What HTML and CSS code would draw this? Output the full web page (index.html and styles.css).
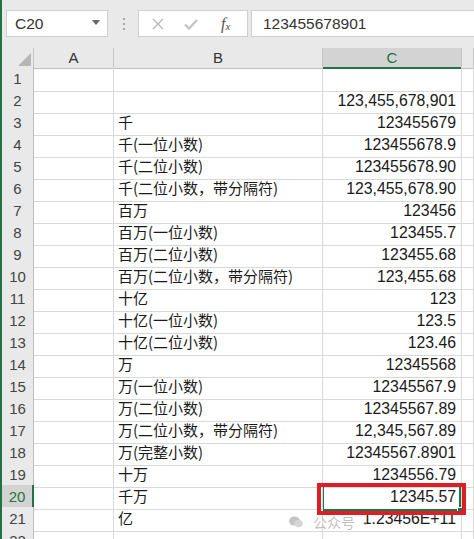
FILE: index.html
```html
<!DOCTYPE html>
<html lang="zh-CN">
  <head>
    <meta charset="utf-8">
    <title>数字格式 - 千 / 百万 / 十亿 / 万</title>
    <link rel="stylesheet" href="styles.css">
  </head>
  <body>
    <div class="Toolbar">
      <div class="Name-Box">
        <span>C20</span>
        <svg class="Drop" width="8" height="5" viewBox="0 0 8 5"><path d="M0 0h8L4 5z" fill="#666"/></svg>
      </div>
      <div class="Grip"><i></i><i></i><i></i></div>
      <div class="Fx-Box">
        <svg width="12" height="12" viewBox="0 0 12 12"><path d="M1 1l10 10M11 1L1 11" stroke="#b8b8b8" stroke-width="1.4"/></svg>
        <svg width="14" height="12" viewBox="0 0 14 12"><path d="M1 6.5l4 4L13 2" stroke="#c4c4c4" stroke-width="2.4" fill="none"/></svg>
        <span class="Fx">f<sub>x</sub></span>
      </div>
      <div class="Formula">123455678901</div>
    </div>

    <div class="Sheet">
      <div class="Row Head">
        <div class="Corner"><svg width="13" height="13" viewBox="0 0 13 13"><path d="M13 0v13H0z" fill="#b6b6b6"/></svg></div>
        <div class="Col">A</div>
        <div class="Col">B</div>
        <div class="Col Active">C</div>
        <div class="Col"></div>
      </div>
      <div class="Row"><div class="Num">1</div><div></div><div></div><div></div><div></div></div>
      <div class="Row"><div class="Num">2</div><div></div><div></div><div class="Val">123,455,678,901</div><div></div></div>
      <div class="Row"><div class="Num">3</div><div></div><div class="Txt">千</div><div class="Val">123455679</div><div></div></div>
      <div class="Row"><div class="Num">4</div><div></div><div class="Txt">千(一位小数)</div><div class="Val">123455678.9</div><div></div></div>
      <div class="Row"><div class="Num">5</div><div></div><div class="Txt">千(二位小数)</div><div class="Val">123455678.90</div><div></div></div>
      <div class="Row"><div class="Num">6</div><div></div><div class="Txt">千(二位小数，带分隔符)</div><div class="Val">123,455,678.90</div><div></div></div>
      <div class="Row"><div class="Num">7</div><div></div><div class="Txt">百万</div><div class="Val">123456</div><div></div></div>
      <div class="Row"><div class="Num">8</div><div></div><div class="Txt">百万(一位小数)</div><div class="Val">123455.7</div><div></div></div>
      <div class="Row"><div class="Num">9</div><div></div><div class="Txt">百万(二位小数)</div><div class="Val">123455.68</div><div></div></div>
      <div class="Row"><div class="Num">10</div><div></div><div class="Txt">百万(二位小数，带分隔符)</div><div class="Val">123,455.68</div><div></div></div>
      <div class="Row"><div class="Num">11</div><div></div><div class="Txt">十亿</div><div class="Val">123</div><div></div></div>
      <div class="Row"><div class="Num">12</div><div></div><div class="Txt">十亿(一位小数)</div><div class="Val">123.5</div><div></div></div>
      <div class="Row"><div class="Num">13</div><div></div><div class="Txt">十亿(二位小数)</div><div class="Val">123.46</div><div></div></div>
      <div class="Row"><div class="Num">14</div><div></div><div class="Txt">万</div><div class="Val">12345568</div><div></div></div>
      <div class="Row"><div class="Num">15</div><div></div><div class="Txt">万(一位小数)</div><div class="Val">12345567.9</div><div></div></div>
      <div class="Row"><div class="Num">16</div><div></div><div class="Txt">万(二位小数)</div><div class="Val">12345567.89</div><div></div></div>
      <div class="Row"><div class="Num">17</div><div></div><div class="Txt">万(二位小数，带分隔符)</div><div class="Val">12,345,567.89</div><div></div></div>
      <div class="Row"><div class="Num">18</div><div></div><div class="Txt">万(完整小数)</div><div class="Val">12345567.8901</div><div></div></div>
      <div class="Row"><div class="Num">19</div><div></div><div class="Txt">十万</div><div class="Val">1234556.79</div><div></div></div>
      <div class="Row"><div class="Num Active">20</div><div></div><div class="Txt">千万</div>
        <div class="Val Current">12345.57<span class="Sel"><i></i></span><span class="Mark"></span></div><div></div></div>
      <div class="Row"><div class="Num">21</div><div></div><div class="Txt">亿</div><div class="Val">1.23456E+11</div><div></div></div>
      <div class="Row"><div class="Num">22</div><div></div><div></div><div></div><div></div></div>
    </div>

    <div class="Stamp">
      <svg width="14" height="12" viewBox="0 0 14 12"><ellipse cx="5.5" cy="5" rx="5.5" ry="4.6" fill="#c4c4c4"/><ellipse cx="9.5" cy="7.6" rx="4.5" ry="3.8" fill="#d6d6d6"/></svg>
      <span>公众号 ·</span>
    </div>
  </body>
</html>
```

FILE: styles.css
```css
body {
  margin: 0;
  height: 539px;
  overflow: hidden;
  border-left: 2px solid #217346;
  background: #fff;
  font-family: 'Liberation Sans', 'Noto Sans CJK SC', sans-serif;
  color: #1a1a1a;
  position: relative;
}

/* name box + formula bar */
.Toolbar {
  display: flex;
  align-items: flex-start;
  height: 48px;
  box-sizing: border-box;
  padding: 10px 0 0 4px;
  background: #e9e9e9;
}

.Name-Box {
  display: flex;
  align-items: center;
  justify-content: space-between;
  width: 102px;
  height: 27px;
  box-sizing: border-box;
  padding: 0 7px 0 8px;
  background: #fff;
  border: 1px solid #cfcfcf;
  font-size: 15.5px;
  color: #333;
}

.Name-Box .Drop {
  margin-top: -3px;
}

.Grip {
  display: flex;
  flex-direction: column;
  gap: 3px;
  padding: 8px 0 0 15px;
  width: 15px;
}

.Grip i {
  display: block;
  width: 2px;
  height: 2px;
  background: #a8a8a8;
}

.Fx-Box {
  display: flex;
  align-items: center;
  width: 110px;
  height: 27px;
  box-sizing: border-box;
  padding-left: 13px;
  background: #fff;
  border: 1px solid #cfcfcf;
  gap: 20px;
}

.Fx {
  font-family: 'Liberation Serif', serif;
  font-style: italic;
  font-size: 16px;
  color: #555;
  margin-left: 3px;
}

.Fx sub {
  font-size: 11px;
  vertical-align: -1px;
}

.Formula {
  flex: 1;
  height: 27px;
  box-sizing: border-box;
  margin-left: 3px;
  padding-left: 11px;
  line-height: 26px;
  background: #fff;
  border: 1px solid #cfcfcf;
  border-right: none;
  font-size: 15.5px;
  color: #333;
}

/* grid */
.Row {
  display: grid;
  grid-template-columns: 32px 80px 209px 139px 1fr;
  height: 22px;
}

.Row > div {
  box-sizing: border-box;
  border-right: 1px solid #d9d9d9;
  border-bottom: 1px solid #d9d9d9;
  line-height: 24px;
  white-space: nowrap;
  overflow: visible;
}

.Row.Head {
  height: 19px;
}

.Row.Head > div {
  background: #e9e9e9;
  border-right-color: #c4c4c4;
  border-bottom-color: #bdbdbd;
  text-align: center;
  font-size: 15px;
  line-height: 20px;
  color: #333;
}

.Row.Head .Corner {
  display: flex;
  align-items: flex-end;
  justify-content: flex-end;
  padding: 0 2px 2px 0;
}

.Row.Head .Col.Active {
  background: #d3d3d3;
  color: #217346;
  border-bottom: 2px solid #217346;
  line-height: 19px;
}

.Row .Num {
  background: #e9e9e9;
  border-right-color: #bdbdbd;
  border-bottom-color: #cdcdcd;
  text-align: center;
  font-size: 15px;
  color: #444;
}

.Row .Num.Active {
  background: #d3d3d3;
  color: #217346;
  border-right: 2px solid #217346;
}

.Txt {
  padding-left: 4px;
  font-size: 15px;
  font-family: 'Noto Sans CJK SC', 'Liberation Sans', sans-serif;
  line-height: 22px !important;
  position: relative;
  z-index: 1;
}

.Val {
  text-align: right;
  padding-right: 5px;
  font-size: 15.8px;
}

.Current {
  position: relative;
}

.Sel {
  position: absolute;
  top: -1px;
  left: -1px;
  right: 0;
  bottom: -2px;
  border: 2px solid #217346;
}

.Sel i {
  position: absolute;
  right: -4px;
  bottom: -4px;
  width: 4px;
  height: 4px;
  background: #217346;
  border: 1px solid #fff;
}

.Mark {
  position: absolute;
  top: -2px;
  left: -6px;
  right: -5px;
  bottom: -6px;
  border: 4px solid #dc1f26;
  z-index: 2;
}

/* account watermark over the last rows */
.Stamp {
  position: absolute;
  left: 287px;
  top: 512px;
  display: flex;
  align-items: center;
  gap: 10px;
  font-family: 'Noto Sans CJK SC', sans-serif;
  font-size: 14px;
  color: rgba(150, 150, 150, 0.6);
  z-index: 3;
}
```
